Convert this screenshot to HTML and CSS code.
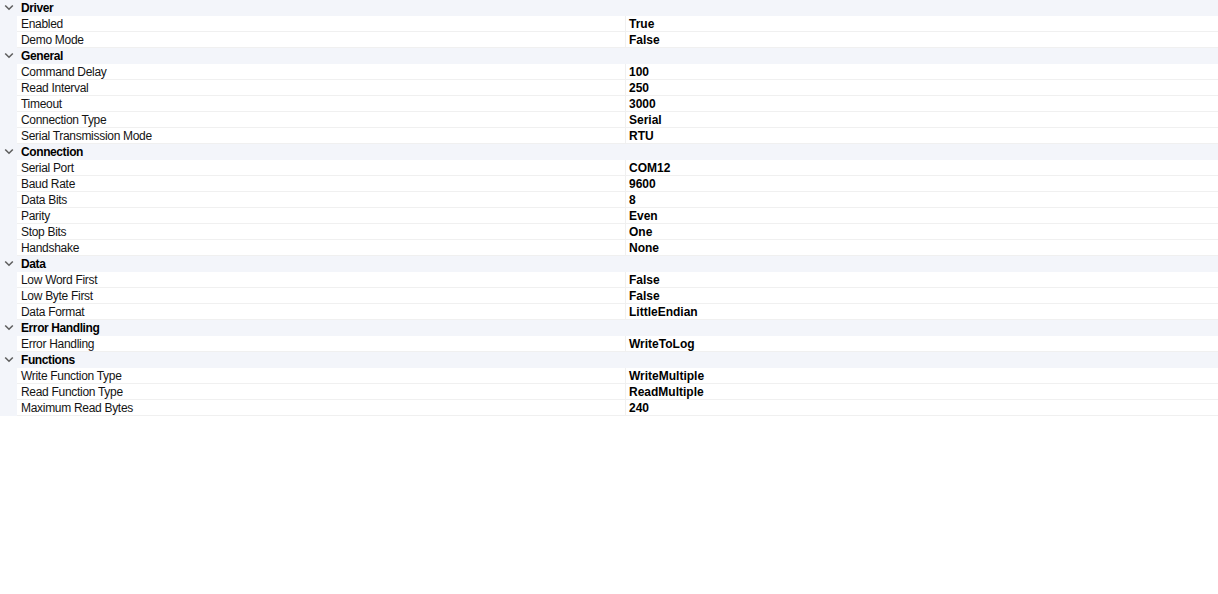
FILE: index.html
```html
<!DOCTYPE html>
<html>
<head>
<meta charset="utf-8">
<link rel="stylesheet" href="styles.css">
</head>
<body>
<div class="grid">
  <div class="cat"><span class="chev"><svg width="10" height="7" viewBox="0 0 10 7"><path d="M1.2 1.5 L5 5.2 L8.8 1.5" fill="none" stroke="#5f5f5f" stroke-width="1.6"/></svg></span><span class="cat-name">Driver</span></div>
  <div class="prop"><div class="gutter"></div><div class="name">Enabled</div><div class="value">True</div></div>
  <div class="prop"><div class="gutter"></div><div class="name">Demo Mode</div><div class="value">False</div></div>

  <div class="cat"><span class="chev"><svg width="10" height="7" viewBox="0 0 10 7"><path d="M1.2 1.5 L5 5.2 L8.8 1.5" fill="none" stroke="#5f5f5f" stroke-width="1.6"/></svg></span><span class="cat-name">General</span></div>
  <div class="prop"><div class="gutter"></div><div class="name">Command Delay</div><div class="value">100</div></div>
  <div class="prop"><div class="gutter"></div><div class="name">Read Interval</div><div class="value">250</div></div>
  <div class="prop"><div class="gutter"></div><div class="name">Timeout</div><div class="value">3000</div></div>
  <div class="prop"><div class="gutter"></div><div class="name">Connection Type</div><div class="value">Serial</div></div>
  <div class="prop"><div class="gutter"></div><div class="name">Serial Transmission Mode</div><div class="value">RTU</div></div>

  <div class="cat"><span class="chev"><svg width="10" height="7" viewBox="0 0 10 7"><path d="M1.2 1.5 L5 5.2 L8.8 1.5" fill="none" stroke="#5f5f5f" stroke-width="1.6"/></svg></span><span class="cat-name">Connection</span></div>
  <div class="prop"><div class="gutter"></div><div class="name">Serial Port</div><div class="value">COM12</div></div>
  <div class="prop"><div class="gutter"></div><div class="name">Baud Rate</div><div class="value">9600</div></div>
  <div class="prop"><div class="gutter"></div><div class="name">Data Bits</div><div class="value">8</div></div>
  <div class="prop"><div class="gutter"></div><div class="name">Parity</div><div class="value">Even</div></div>
  <div class="prop"><div class="gutter"></div><div class="name">Stop Bits</div><div class="value">One</div></div>
  <div class="prop"><div class="gutter"></div><div class="name">Handshake</div><div class="value">None</div></div>

  <div class="cat"><span class="chev"><svg width="10" height="7" viewBox="0 0 10 7"><path d="M1.2 1.5 L5 5.2 L8.8 1.5" fill="none" stroke="#5f5f5f" stroke-width="1.6"/></svg></span><span class="cat-name">Data</span></div>
  <div class="prop"><div class="gutter"></div><div class="name">Low Word First</div><div class="value">False</div></div>
  <div class="prop"><div class="gutter"></div><div class="name">Low Byte First</div><div class="value">False</div></div>
  <div class="prop"><div class="gutter"></div><div class="name">Data Format</div><div class="value">LittleEndian</div></div>

  <div class="cat"><span class="chev"><svg width="10" height="7" viewBox="0 0 10 7"><path d="M1.2 1.5 L5 5.2 L8.8 1.5" fill="none" stroke="#5f5f5f" stroke-width="1.6"/></svg></span><span class="cat-name">Error Handling</span></div>
  <div class="prop"><div class="gutter"></div><div class="name">Error Handling</div><div class="value">WriteToLog</div></div>

  <div class="cat"><span class="chev"><svg width="10" height="7" viewBox="0 0 10 7"><path d="M1.2 1.5 L5 5.2 L8.8 1.5" fill="none" stroke="#5f5f5f" stroke-width="1.6"/></svg></span><span class="cat-name">Functions</span></div>
  <div class="prop"><div class="gutter"></div><div class="name">Write Function Type</div><div class="value">WriteMultiple</div></div>
  <div class="prop"><div class="gutter"></div><div class="name">Read Function Type</div><div class="value">ReadMultiple</div></div>
  <div class="prop"><div class="gutter"></div><div class="name">Maximum Read Bytes</div><div class="value">240</div></div>
</div>
</body>
</html>
```

FILE: styles.css
```css
html, body {
  margin: 0;
  padding: 0;
  background: #ffffff;
}

body {
  font-family: "Liberation Sans", Arial, sans-serif;
  font-size: 12px;
  color: #000000;
}

.grid {
  width: 1218px;
  display: flex;
  flex-direction: column;
}

.cat {
  height: 16px;
  background: #f3f5fa;
  display: flex;
  align-items: center;
  box-sizing: border-box;
}

.chev {
  width: 21px;
  height: 16px;
  display: flex;
  align-items: center;
  padding-left: 4px;
  padding-bottom: 1px;
  box-sizing: border-box;
}

.chev svg {
  display: block;
}

.cat-name {
  font-weight: bold;
  font-size: 12px;
  letter-spacing: -0.4px;
  line-height: 16px;
}

.prop {
  height: 16px;
  display: grid;
  grid-template-columns: 17px 608px 1fr;
}

.gutter {
  background: #f3f5fa;
}

.name,
.value {
  line-height: 15px;
  height: 16px;
  padding-top: 1px;
  box-sizing: border-box;
  border-bottom: 1px solid #f0f0f0;
  white-space: nowrap;
}

.name {
  padding-left: 4px;
  letter-spacing: -0.3px;
  color: #141414;
}

.value {
  border-left: 1px solid #f0f0f0;
  padding-left: 3px;
  font-weight: bold;
}
```
